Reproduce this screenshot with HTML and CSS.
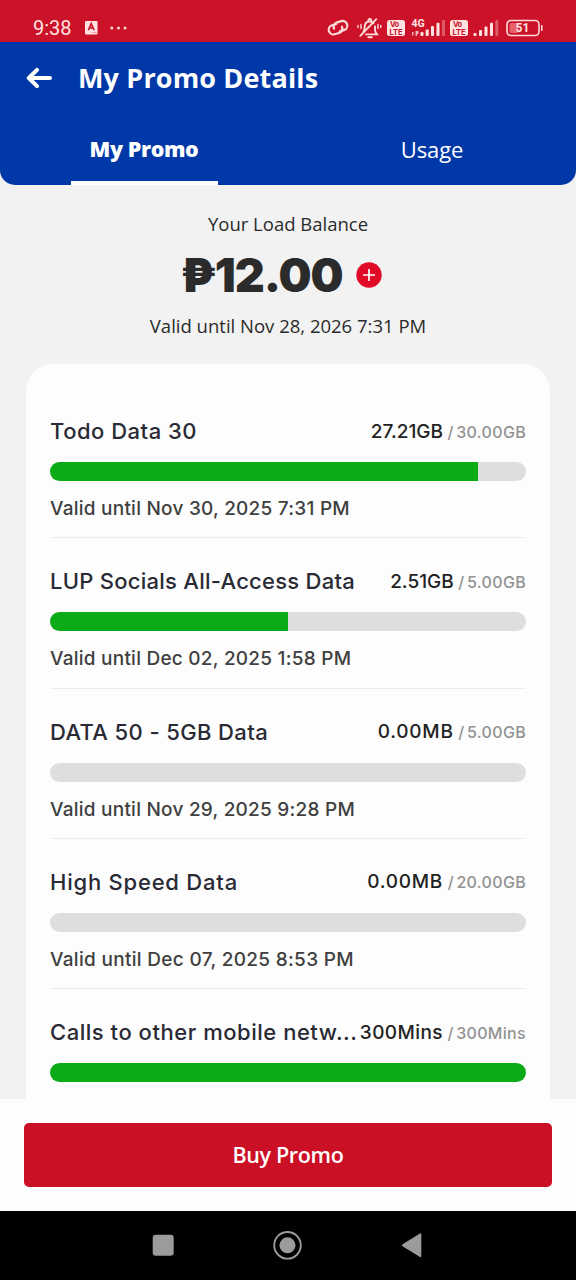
FILE: index.html
```html
<!DOCTYPE html>
<html lang="en">
<head>
<meta charset="utf-8">
<title>My Promo Details</title>
<link rel="stylesheet" href="styles.css">
</head>
<body>
<div class="screen">
  <div class="status">
    <div class="status-left">
      <span class="clock">9:38</span>
      <svg class="ic-app" width="13" height="14" viewBox="0 0 13 14"><rect width="12.5" height="13.5" rx="1" fill="#ffe3e1"/><path d="M3.3 9.3 6.2 2.6 9.1 9.3M4.4 7h3.6" fill="none" stroke="#cb1228" stroke-width="1.6"/><path d="M6.5 11.6h5" stroke="#e88" stroke-width=".8"/></svg>
      <svg class="ic-dots" width="17" height="4" viewBox="0 0 17 4" fill="#ffd6d4"><circle cx="1.8" cy="2" r="1.5"/><circle cx="8.500" cy="2" r="1.5"/><circle cx="15" cy="2" r="1.5"/></svg>
    </div>
    <svg class="status-icons" width="218" height="24" viewBox="326 16 218 24" fill="none" stroke="#ffdcda">
      <g stroke-width="2.2" stroke-linecap="round" transform="rotate(-16 338 27.700)"><path d="M337.300 23.700h-4.300a4.700 4.700 0 0 0 0 9.400h4.500a4.700 4.700 0 0 0 4.600-5.200"/><path d="M338.700 31.700h4.300a4.700 4.700 0 0 0 0-9.400h-4.500a4.700 4.700 0 0 0-4.600 5.200"/></g>
      <g stroke-width="1.900" stroke-linecap="round"><path d="M363.500 31.500c1-1.200 1.200-2.300 1.200-4.500 0-3.700 2-5.500 5-5.500 1.600 0 3 .6 3.800 1.700M375 26.500v3.500c0 2 .8 3 2 4.400h-11"/><path d="M368.300 20.200c.3-1.600 2.700-1.600 3 0M368.300 37.200h3.500"/><path d="m360.300 35.800 16-16.600"/><path d="M361 24.500v4M358 25.500v2M378 24.500v4M380.700 25.500v2" stroke-width="1.400"/></g>
      <g stroke="none" fill="#ffe3e1"><rect x="387" y="20" width="18" height="16" rx="2.500"/><rect x="450" y="20" width="18" height="16" rx="2.500"/></g>
      <g class="volte" stroke="none" text-anchor="middle"><text x="394.500" y="27.200" textLength="9">Vo</text><text x="396" y="34.600" textLength="13">LTE</text><text x="457.500" y="27.200" textLength="9">Vo</text><text x="459" y="34.600" textLength="13">LTE</text></g>
      <text class="net" x="411.500" y="26.800" stroke="none">4G</text>
      <g stroke="none" fill="#ffe3e1"><rect x="420.500" y="32" width="3" height="4" rx="1"/><rect x="425.700" y="29.500" width="3" height="6.500" rx="1"/><rect x="431" y="26" width="3" height="10" rx="1"/><rect x="436.500" y="22.700" width="3" height="13.300" rx="1"/><rect x="442" y="20" width="3" height="16" rx="1" opacity=".35"/>
      <path d="M412 32h1.500v3.500H412zM415.500 31h3v3h-1.500v2h-1.500z" opacity=".8"/>
      <rect x="473.500" y="33" width="3" height="3" rx="1"/><rect x="479" y="30" width="3" height="6" rx="1"/><rect x="484.500" y="26.500" width="3" height="9.500" rx="1"/><rect x="490" y="22.700" width="3" height="13.300" rx="1"/><rect x="495.300" y="20" width="3" height="16" rx="1" opacity=".35"/></g>
      <rect x="507" y="20.500" width="32" height="15" rx="4" stroke-width="1.600"/><rect x="509.500" y="23" width="9" height="10" rx="1.500" stroke="none" fill="#e8606a"/><path d="M541.800 25.800v4.500" stroke-width="1.600" stroke-linecap="round"/>
      <text class="batt" x="522.500" y="32.300" text-anchor="middle" stroke="none">51</text>
    </svg>
  </div>

  <div class="app">
    <header class="header">
      <div class="title-row">
        <svg width="27" height="22" viewBox="0 0 27 22" fill="none" stroke="#fff" stroke-width="4" stroke-linecap="round" stroke-linejoin="round"><path d="M11 2.800 2.800 11l8.200 8.200M3.500 11H24"/></svg>
        <h1 class="title">My Promo Details</h1>
      </div>
      <div class="tabs">
        <div class="tab tab-active">My Promo</div>
        <div class="tab">Usage</div>
      </div>
    </header>

    <main class="content">
      <section class="balance">
        <div class="label">Your Load Balance</div>
        <div class="amount-row"><span class="amount">₱12.00</span>
          <svg class="plus" width="26" height="26" viewBox="0 0 26 26"><circle cx="13" cy="13" r="12.700" fill="#e10a26"/><path d="M7 13h12M13 7v12" stroke="#fff" stroke-width="1.700"/></svg>
        </div>
        <div class="expiry">Valid until Nov 28, 2026 7:31 PM</div>
      </section>

      <section class="card">
        <article class="item todo">
          <div class="item-head"><h2 class="name">Todo Data 30</h2><div class="quota"><span class="left">27.21GB</span><span class="total">/ 30.00GB</span></div></div>
          <div class="bar"><div class="fill" style="width:90%"></div></div>
          <div class="date">Valid until Nov 30, 2025 7:31 PM</div>
        </article>
        <article class="item socials">
          <div class="item-head"><h2 class="name">LUP Socials All-Access Data</h2><div class="quota"><span class="left">2.51GB</span><span class="total">/ 5.00GB</span></div></div>
          <div class="bar"><div class="fill" style="width:50%"></div></div>
          <div class="date">Valid until Dec 02, 2025 1:58 PM</div>
        </article>
        <article class="item data50">
          <div class="item-head"><h2 class="name">DATA 50 - 5GB Data</h2><div class="quota"><span class="left">0.00MB</span><span class="total">/ 5.00GB</span></div></div>
          <div class="bar"></div>
          <div class="date">Valid until Nov 29, 2025 9:28 PM</div>
        </article>
        <article class="item highspeed">
          <div class="item-head"><h2 class="name">High Speed Data</h2><div class="quota"><span class="left">0.00MB</span><span class="total">/ 20.00GB</span></div></div>
          <div class="bar"></div>
          <div class="date">Valid until Dec 07, 2025 8:53 PM</div>
        </article>
        <article class="item calls">
          <div class="item-head"><h2 class="name">Calls to other mobile netw...</h2><div class="quota"><span class="left">300Mins</span><span class="total">/ 300Mins</span></div></div>
          <div class="bar"><div class="fill" style="width:100%"></div></div>
        </article>
      </section>
    </main>

    <footer class="footer"><button class="buy">Buy Promo</button></footer>
  </div>

  <nav class="nav">
    <svg width="576" height="69" viewBox="0 0 576 69" fill="#9b9b9b"><rect x="152.700" y="23.700" width="21" height="21" rx="3"/><circle cx="287.500" cy="34.300" r="13.300" fill="none" stroke="#9b9b9b" stroke-width="1.900"/><circle cx="287.500" cy="34.300" r="8"/><path d="M402.500 33.300 420 22.500q1.300-.7 1.300.8V45.300q0 1.500-1.300.8L402.500 35.300q-1.200-1 0-2z"/></svg>
  </nav>
</div>
</body>
</html>
```
FILE: styles.css
```css
* { box-sizing: border-box; }
body { margin: 0; font-family: "Open Sans", "Noto Sans", sans-serif; }
h1, h2 { margin: 0; font: inherit; }
svg { display: block; flex: none; }

.screen { display: flex; flex-direction: column; width: 576px; height: 1280px; overflow: hidden; background: #cb1228; }

.status { flex: none; height: 42px; padding: 16px 32px 0 33px; display: flex; justify-content: space-between; }
.status-left { display: flex; align-items: center; height: 24px; }
.clock { font: 400 20px/24px Roboto, sans-serif; color: #ffe3e1; }
.ic-app { margin-left: 13px; }
.ic-dots { margin-left: 12px; }
.volte { fill: #cb1228; font: 700 7.500px Inter, sans-serif; }
.net { fill: #ffe3e1; font: 700 10.500px Roboto, sans-serif; }
.batt { fill: #ffe3e1; font: 700 12px Roboto, sans-serif; }

.app { flex: 1; background: #f2f2f2; }

.header { height: 143px; background: #0038a8; color: #fff; border-radius: 0 0 15px 15px; }
.title-row { display: flex; align-items: center; height: 72px; padding-left: 26px; gap: 25px; }
.title { font-size: 27px; font-weight: 700; line-height: 36px; letter-spacing: .15px; }
.tabs { display: grid; grid-template-columns: 1fr 1fr; height: 71px; }
.tab { display: flex; justify-content: center; align-items: center; padding-bottom: 2px; font-size: 22px; line-height: 30px; letter-spacing: -.1px; }
.tab-active { width: 147px; margin: 0 auto; padding: 2px 0 0; border-bottom: 4px solid #fff; font-weight: 800; font-size: 21.500px; letter-spacing: -.4px; }

.content { height: 914px; padding: 0 26px; overflow: hidden; }
.balance { height: 179px; padding-top: 26px; text-align: center; color: #2b2b2b; }
.label, .expiry { font-size: 18.500px; line-height: 26px; }
.amount-row { display: flex; justify-content: center; align-items: center; gap: 14px; height: 76px; padding: 0 13px 1px 0; }
.amount { font: 900 46.500px/50px Inter, sans-serif; letter-spacing: -1.100px; }

.card { background: #fdfdfd; border-radius: 27px 27px 0 0; padding: 24px 24px 0; }
.item { padding: 28px 0 17.300px; border-bottom: 1px solid #ececec; font-family: Inter, sans-serif; font-weight: 500; }
.item-head { display: flex; justify-content: space-between; align-items: center; height: 30px; white-space: nowrap; }
.name { font-size: 22px; color: #2a2a35; }
.quota { display: flex; align-items: baseline; gap: 4.500px; }
.left { font-size: 19px; color: #222; }
.total { font-size: 16px; color: #929292; word-spacing: -2px; letter-spacing: .32px; }
.bar { height: 19px; margin: 16px 0 17px; border-radius: 10px; background: #dedede; overflow: hidden; }
.fill { height: 100%; background: #0aab16; }
.date { font-size: 19px; line-height: 22px; color: #404040; letter-spacing: .24px; }

.todo .name { letter-spacing: .5px; }
.socials .name { letter-spacing: .26px; }
.data50 .name { letter-spacing: .38px; }
.highspeed .name { letter-spacing: .78px; }
.calls .name { letter-spacing: .53px; }
.data50 .left, .highspeed .left { letter-spacing: .77px; }
.calls .left { letter-spacing: .4px; }
.highspeed .date { letter-spacing: .31px; }

.footer { height: 112px; background: #fdfdfd; padding: 24px; }
.buy { display: block; width: 100%; height: 64px; padding: 0 0 2px; border: 0; border-radius: 5px; background: #cb1025; color: #fff; font: 600 21.500px "Open Sans", sans-serif; letter-spacing: -.35px; }
.nav { flex: none; height: 69px; background: #000; }
```
